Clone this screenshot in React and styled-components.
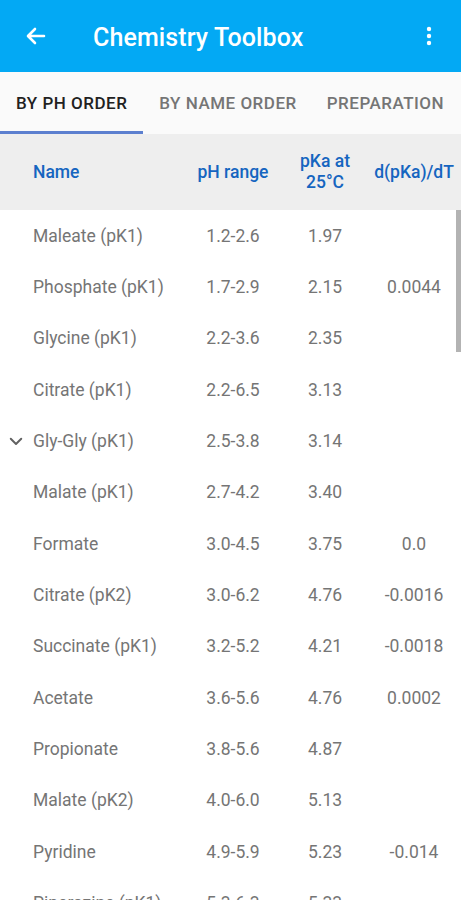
import React from "react";
import styled, { createGlobalStyle } from "styled-components";

const Global = createGlobalStyle`
  html, body { margin: 0; padding: 0; background: #fff; overflow: hidden; }
  body { font-family: Roboto, "Noto Sans", sans-serif; }
`;

const Screen = styled.div`
  width: 461px;
  height: 900px;
  display: flex;
  flex-direction: column;
  overflow: hidden;
  position: relative;
`;

const AppBar = styled.header`
  height: 72px;
  flex: none;
  background: #03a9f4;
  display: flex;
  align-items: center;
  padding: 0 18px 0 22px;
  color: #fff;
`;

const IconBtn = styled.div`
  width: 28px;
  height: 28px;
  display: flex;
  align-items: center;
  justify-content: center;
`;

const Title = styled.h1`
  flex: 1;
  margin: 2px 0 0 43px;
  font-size: 25px;
  font-weight: 500;
  letter-spacing: 0.1px;
`;

const Tabs = styled.nav`
  height: 62px;
  flex: none;
  background: #fafafa;
  display: flex;
  align-items: stretch;
`;

const Tab = styled.div`
  position: relative;
  display: flex;
  align-items: center;
  padding: 0 ${p => p.$pr}px 0 ${p => p.$pl}px;
  font-size: 17px;
  font-weight: 500;
  letter-spacing: 0.5px;
  color: ${p => (p.$active ? "#212121" : "#757575")};
  &::after {
    content: "";
    display: ${p => (p.$active ? "block" : "none")};
    position: absolute;
    left: 0;
    right: 0;
    bottom: 0;
    height: 3px;
    background: #5c7fcf;
  }
`;

const cols = "150px 100px 84px 1fr";

const HeadRow = styled.div`
  height: 76px;
  flex: none;
  background: #eeeeee;
  display: grid;
  grid-template-columns: ${cols};
  align-items: center;
  padding-left: 33px;
  color: #1565c0;
  font-size: 17.5px;
  font-weight: 500;
`;

const HeadCell = styled.div`
  text-align: ${p => (p.$left ? "left" : "center")};
  line-height: 21px;
  white-space: nowrap;
`;

const Body = styled.div`
  position: relative;
  flex: 1;
  overflow: hidden;
`;

const Row = styled.div`
  height: 51.33px;
  display: grid;
  grid-template-columns: ${cols};
  align-items: center;
  padding-left: 33px;
  color: #757575;
  font-size: 17.5px;
  position: relative;
`;

const Cell = styled.div`
  text-align: ${p => (p.$left ? "left" : "center")};
  white-space: nowrap;
`;

const Chevron = styled.svg`
  position: absolute;
  left: 7px;
  top: 50%;
  margin-top: -9px;
`;

const ScrollThumb = styled.div`
  position: absolute;
  right: 0;
  top: 0;
  width: 5px;
  height: 142px;
  background: #b3b3b3;
`;

const rows = [
  ["Maleate (pK1)", "1.2-2.6", "1.97", ""],
  ["Phosphate (pK1)", "1.7-2.9", "2.15", "0.0044"],
  ["Glycine (pK1)", "2.2-3.6", "2.35", ""],
  ["Citrate (pK1)", "2.2-6.5", "3.13", ""],
  ["Gly-Gly (pK1)", "2.5-3.8", "3.14", "", true],
  ["Malate (pK1)", "2.7-4.2", "3.40", ""],
  ["Formate", "3.0-4.5", "3.75", "0.0"],
  ["Citrate (pK2)", "3.0-6.2", "4.76", "-0.0016"],
  ["Succinate (pK1)", "3.2-5.2", "4.21", "-0.0018"],
  ["Acetate", "3.6-5.6", "4.76", "0.0002"],
  ["Propionate", "3.8-5.6", "4.87", ""],
  ["Malate (pK2)", "4.0-6.0", "5.13", ""],
  ["Pyridine", "4.9-5.9", "5.23", "-0.014"],
  ["Piperazine (pK1)", "5.3-6.3", "5.33", ""],
];

export default function App() {
  return (
    <Screen>
      <Global />
      <AppBar>
        <IconBtn>
          <svg width="24" height="24" viewBox="0 0 24 24" fill="none" stroke="#fff" strokeWidth="2.6" strokeLinecap="round" strokeLinejoin="round">
            <path d="M20 12H5M11 5l-7 7 7 7" />
          </svg>
        </IconBtn>
        <Title>Chemistry Toolbox</Title>
        <IconBtn>
          <svg width="24" height="24" viewBox="0 0 24 24" fill="#fff">
            <circle cx="12" cy="5" r="2.2" />
            <circle cx="12" cy="12" r="2.2" />
            <circle cx="12" cy="19" r="2.2" />
          </svg>
        </IconBtn>
      </AppBar>
      <Tabs>
        <Tab $active $pl={16} $pr={16}>BY PH ORDER</Tab>
        <Tab $pl={16} $pr={15}>BY NAME ORDER</Tab>
        <Tab $pl={15} $pr={16}>PREPARATION</Tab>
      </Tabs>
      <HeadRow>
        <HeadCell $left>Name</HeadCell>
        <HeadCell>pH range</HeadCell>
        <HeadCell>pKa at<br />25°C</HeadCell>
        <HeadCell>d(pKa)/dT</HeadCell>
      </HeadRow>
      <Body>
        {rows.map((r, i) => (
          <Row key={i}>
            {r[4] && (
              <Chevron width="18" height="18" viewBox="0 0 24 24" fill="none" stroke="#616161" strokeWidth="2.6" strokeLinecap="round" strokeLinejoin="round">
                <path d="M5 9l7 7 7-7" />
              </Chevron>
            )}
            <Cell $left>{r[0]}</Cell>
            <Cell>{r[1]}</Cell>
            <Cell>{r[2]}</Cell>
            <Cell>{r[3]}</Cell>
          </Row>
        ))}
        <ScrollThumb />
      </Body>
    </Screen>
  );
}
